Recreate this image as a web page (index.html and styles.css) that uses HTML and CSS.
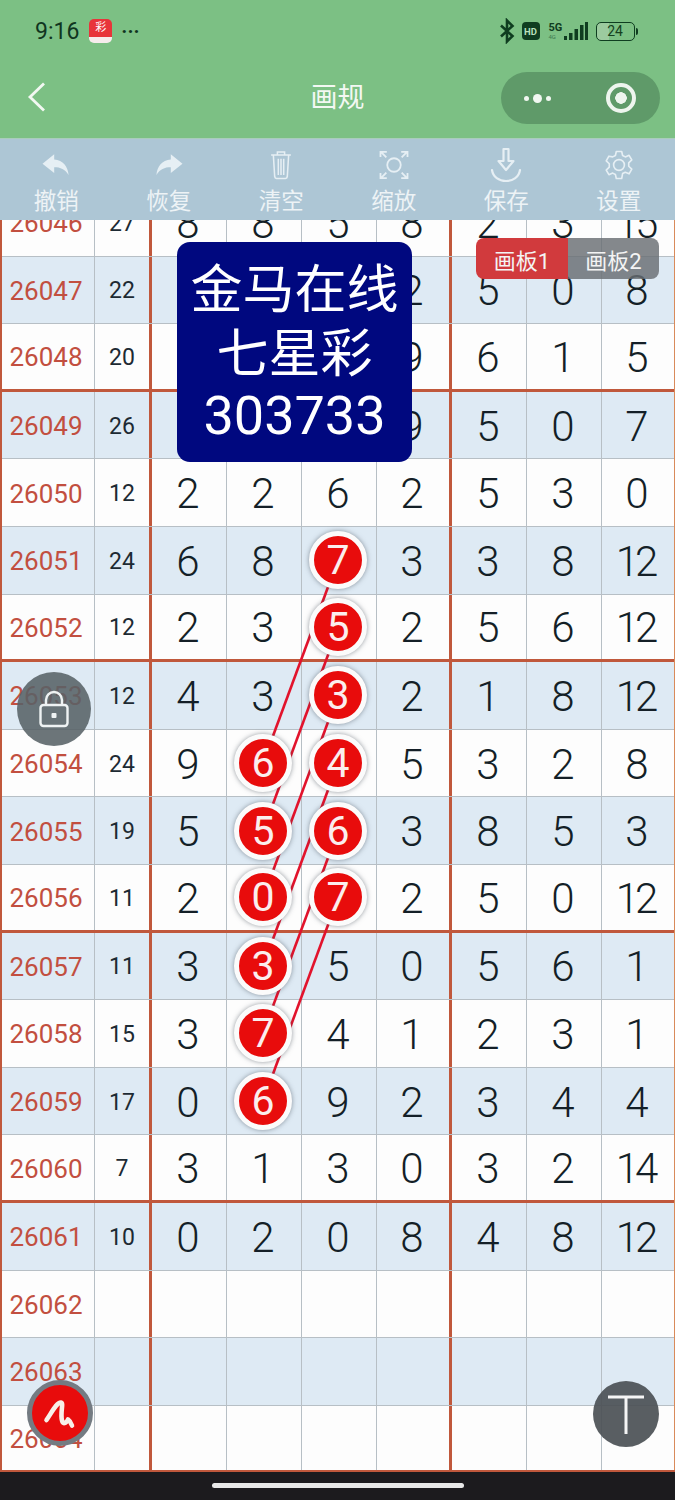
FILE: index.html
```html
<!DOCTYPE html>
<html lang="zh">
<head>
<meta charset="utf-8">
<title>画规</title>
<link rel="stylesheet" href="styles.css">
</head>
<body>
<div class="screen">
  <header class="top">
    <div class="status">
      <div class="status-left">
        <span class="time">9:16</span>
        <span class="app-icon"><span class="app-mark">彩</span></span>
        <span class="status-dots">···</span>
      </div>
      <div class="status-right">
        <svg class="bt" width="16" height="26" viewBox="0 0 16 26"><path d="M2 7.500L13.500 18 8 23.500V2.500L13.500 8 2 18.500" fill="none" stroke="#0f3d20" stroke-width="2.600"/></svg>
        <span class="hd">HD</span>
        <span class="net"><span class="net-5g">5G</span><span class="net-4g">4G</span></span>
        <svg class="signal" width="24" height="20" viewBox="0 0 24 20"><g fill="#0f3d20"><rect x="0" y="15" width="3" height="4"/><rect x="5" y="12" width="3.500" height="7"/><rect x="10.500" y="8" width="3.500" height="11"/><rect x="16" y="4" width="3.500" height="15"/><rect x="21" y="1" width="3" height="18"/></g></svg>
        <span class="battery"><span class="battery-level">24</span></span>
        <span class="battery-cap"></span>
      </div>
    </div>
    <div class="nav">
      <svg class="back" width="20" height="32" viewBox="0 0 20 32"><path d="M17 2.500L3 16l14 13.500" fill="none" stroke="#f2f8f2" stroke-width="2.800"/></svg>
      <h1 class="title">画规</h1>
      <div class="capsule">
        <span class="cap-dots"><i class="dot-s"></i><i class="dot-l"></i><i class="dot-s"></i></span>
        <span class="cap-ring"></span>
      </div>
    </div>
  </header>

  <nav class="toolbar">
    <div class="tool">
      <svg class="tool-icon" width="36" height="36" viewBox="-2 -2 40 40"><path d="M16 6L3 16.500 16 27v-6.500c7 0 12 2 16 8.500-1-9.500-6-16-16-17z" fill="#e6eff4"/></svg>
      <span class="tool-label">撤销</span>
    </div>
    <div class="tool">
      <svg class="tool-icon" width="36" height="36" viewBox="-2 -2 40 40"><path d="M20 6l13 10.500L20 27v-6.500c-7 0-12 2-16 8.500 1-9.500 6-16 16-17z" fill="#e6eff4"/></svg>
      <span class="tool-label">恢复</span>
    </div>
    <div class="tool">
      <svg class="tool-icon" width="36" height="36" viewBox="-2 -2 40 40"><g fill="none" stroke="#e6eff4" stroke-width="1.700"><path d="M7 7h22M14 7V3.500h8V7M9.500 7l1.500 24q.2 2 2 2h10q1.800 0 2-2l1.500-24M15 11v18M18 11v18M21 11v18"/></g></svg>
      <span class="tool-label">清空</span>
    </div>
    <div class="tool">
      <svg class="tool-icon" width="36" height="36" viewBox="-2 -2 40 40"><g fill="none" stroke="#e6eff4" stroke-width="2"><circle cx="18" cy="18" r="7.500"/><path d="M3 9V3.500h7M3.500 3.500l6 6M33 9V3.500h-7M32.500 3.500l-6 6M3 27v5.500h7M3.500 32.500l6-6M33 27v5.500h-7M32.500 32.500l-6-6"/></g></svg>
      <span class="tool-label">缩放</span>
    </div>
    <div class="tool">
      <svg class="tool-icon" width="36" height="36" viewBox="0 0 36 36"><g fill="none" stroke="#e6eff4" stroke-width="2.200" stroke-linejoin="round" stroke-linecap="round"><path d="M15.500 2h5v12h5L18 23l-7.500-9h5z"/><path d="M4 23c1 7 7 11 14 11s13-4 14-11"/></g></svg>
      <span class="tool-label">保存</span>
    </div>
    <div class="tool">
      <svg class="tool-icon" width="36" height="36" viewBox="-2 -2 40 40"><g fill="none" stroke="#e6eff4" stroke-width="1.800" stroke-linejoin="round"><circle cx="18" cy="18" r="6"/><path d="M15 3h6l1 4.500 3 1.500 4.200-1.800 3 5.200-3.400 3.200v3.800l3.400 3.200-3 5.200-4.200-1.800-3 1.500L21 33h-6l-1-4.500-3-1.500-4.200 1.800-3-5.200 3.400-3.200v-3.800l-3.400-3.200 3-5.200L11 9l3-1.500z"/></g></svg>
      <span class="tool-label">设置</span>
    </div>
  </nav>

  <main class="board">
    <div class="grid">
      <div class="row"><div class="cell period">26046</div><div class="cell sum">27</div><div class="cell num">8</div><div class="cell num">8</div><div class="cell num">5</div><div class="cell num sep">8</div><div class="cell num">2</div><div class="cell num">3</div><div class="cell num two">15</div></div>
      <div class="row odd"><div class="cell period">26047</div><div class="cell sum">22</div><div class="cell num"></div><div class="cell num"></div><div class="cell num"></div><div class="cell num sep">2</div><div class="cell num">5</div><div class="cell num">0</div><div class="cell num">8</div></div>
      <div class="row group-end"><div class="cell period">26048</div><div class="cell sum">20</div><div class="cell num"></div><div class="cell num"></div><div class="cell num"></div><div class="cell num sep">9</div><div class="cell num">6</div><div class="cell num">1</div><div class="cell num">5</div></div>
      <div class="row odd"><div class="cell period">26049</div><div class="cell sum">26</div><div class="cell num"></div><div class="cell num"></div><div class="cell num"></div><div class="cell num sep">9</div><div class="cell num">5</div><div class="cell num">0</div><div class="cell num">7</div></div>
      <div class="row"><div class="cell period">26050</div><div class="cell sum">12</div><div class="cell num">2</div><div class="cell num">2</div><div class="cell num">6</div><div class="cell num sep">2</div><div class="cell num">5</div><div class="cell num">3</div><div class="cell num">0</div></div>
      <div class="row odd"><div class="cell period">26051</div><div class="cell sum">24</div><div class="cell num">6</div><div class="cell num">8</div><div class="cell num"><span class="ball">7</span></div><div class="cell num sep">3</div><div class="cell num">3</div><div class="cell num">8</div><div class="cell num two">12</div></div>
      <div class="row group-end"><div class="cell period">26052</div><div class="cell sum">12</div><div class="cell num">2</div><div class="cell num">3</div><div class="cell num"><span class="ball">5</span></div><div class="cell num sep">2</div><div class="cell num">5</div><div class="cell num">6</div><div class="cell num two">12</div></div>
      <div class="row odd"><div class="cell period">26053</div><div class="cell sum">12</div><div class="cell num">4</div><div class="cell num">3</div><div class="cell num"><span class="ball">3</span></div><div class="cell num sep">2</div><div class="cell num">1</div><div class="cell num">8</div><div class="cell num two">12</div></div>
      <div class="row"><div class="cell period">26054</div><div class="cell sum">24</div><div class="cell num">9</div><div class="cell num"><span class="ball">6</span></div><div class="cell num"><span class="ball">4</span></div><div class="cell num sep">5</div><div class="cell num">3</div><div class="cell num">2</div><div class="cell num">8</div></div>
      <div class="row odd"><div class="cell period">26055</div><div class="cell sum">19</div><div class="cell num">5</div><div class="cell num"><span class="ball">5</span></div><div class="cell num"><span class="ball">6</span></div><div class="cell num sep">3</div><div class="cell num">8</div><div class="cell num">5</div><div class="cell num">3</div></div>
      <div class="row group-end"><div class="cell period">26056</div><div class="cell sum">11</div><div class="cell num">2</div><div class="cell num"><span class="ball">0</span></div><div class="cell num"><span class="ball">7</span></div><div class="cell num sep">2</div><div class="cell num">5</div><div class="cell num">0</div><div class="cell num two">12</div></div>
      <div class="row odd"><div class="cell period">26057</div><div class="cell sum">11</div><div class="cell num">3</div><div class="cell num"><span class="ball">3</span></div><div class="cell num">5</div><div class="cell num sep">0</div><div class="cell num">5</div><div class="cell num">6</div><div class="cell num">1</div></div>
      <div class="row"><div class="cell period">26058</div><div class="cell sum">15</div><div class="cell num">3</div><div class="cell num"><span class="ball">7</span></div><div class="cell num">4</div><div class="cell num sep">1</div><div class="cell num">2</div><div class="cell num">3</div><div class="cell num">1</div></div>
      <div class="row odd"><div class="cell period">26059</div><div class="cell sum">17</div><div class="cell num">0</div><div class="cell num"><span class="ball">6</span></div><div class="cell num">9</div><div class="cell num sep">2</div><div class="cell num">3</div><div class="cell num">4</div><div class="cell num">4</div></div>
      <div class="row group-end"><div class="cell period">26060</div><div class="cell sum">7</div><div class="cell num">3</div><div class="cell num">1</div><div class="cell num">3</div><div class="cell num sep">0</div><div class="cell num">3</div><div class="cell num">2</div><div class="cell num two">14</div></div>
      <div class="row odd"><div class="cell period">26061</div><div class="cell sum">10</div><div class="cell num">0</div><div class="cell num">2</div><div class="cell num">0</div><div class="cell num sep">8</div><div class="cell num">4</div><div class="cell num">8</div><div class="cell num two">12</div></div>
      <div class="row"><div class="cell period">26062</div><div class="cell sum"></div><div class="cell num"></div><div class="cell num"></div><div class="cell num"></div><div class="cell num sep"></div><div class="cell num"></div><div class="cell num"></div><div class="cell num"></div></div>
      <div class="row odd"><div class="cell period">26063</div><div class="cell sum"></div><div class="cell num"></div><div class="cell num"></div><div class="cell num"></div><div class="cell num sep"></div><div class="cell num"></div><div class="cell num"></div><div class="cell num"></div></div>
      <div class="row group-end"><div class="cell period">26064</div><div class="cell sum"></div><div class="cell num"></div><div class="cell num"></div><div class="cell num"></div><div class="cell num sep"></div><div class="cell num"></div><div class="cell num"></div><div class="cell num"></div></div>
    </div>

    <svg class="links" width="675" height="1252" viewBox="0 0 675 1252">
      <g stroke="#e2132c" stroke-width="2.600">
        <line x1="338" y1="340" x2="263" y2="543"/>
        <line x1="338" y1="408" x2="263" y2="611"/>
        <line x1="338" y1="475" x2="263" y2="678"/>
        <line x1="338" y1="543" x2="263" y2="746"/>
        <line x1="338" y1="611" x2="263" y2="813"/>
        <line x1="338" y1="678" x2="263" y2="881"/>
      </g>
    </svg>

    <div class="tabs">
      <span class="tab tab-on">画板1</span>
      <span class="tab tab-off">画板2</span>
    </div>

    <div class="notice">
      <div>金马在线</div>
      <div>七星彩</div>
      <div class="notice-num">303733</div>
    </div>

    <button class="fab lock" aria-label="锁定">
      <svg width="34" height="40" viewBox="0 0 34 40"><g fill="none" stroke="#eef2f3" stroke-width="2.400"><rect x="3.500" y="16" width="27" height="21" rx="3"/><path d="M9 16V11a8 8 0 0 1 16 0v5"/></g><rect x="14.500" y="24" width="5" height="5" rx="1" fill="#eef2f3"/></svg>
    </button>
    <button class="fab brand" aria-label="画笔">
      <svg width="56" height="56" viewBox="0 0 56 56"><path d="M14.500 35C20 27 25 17 29 17.500c3 .5-1 10 1 18 1 4 4 3 6-1 1.500 1 3 3.500 4 6" fill="none" stroke="#f8efe8" stroke-width="4.600" stroke-linecap="round" stroke-linejoin="round"/></svg>
    </button>
    <button class="fab totop" aria-label="置顶">
      <svg width="40" height="44" viewBox="0 0 40 44"><path d="M2 5h36M20 5v37" fill="none" stroke="#f5f5f5" stroke-width="3"/></svg>
    </button>
  </main>

  <footer class="sysbar"><span class="handle"></span></footer>
</div>
</body>
</html>
```
FILE: styles.css
```css
* { box-sizing: border-box; }
html, body { margin: 0; padding: 0; }
body {
  width: 675px;
  height: 1500px;
  overflow: hidden;
  font-family: Roboto, "Noto Sans CJK SC", sans-serif;
}
.screen {
  width: 675px;
  height: 1500px;
  display: flex;
  flex-direction: column;
  position: relative;
}

/* top */
.top { height: 138px; background: #7cc084; flex: none; }
.status {
  height: 62px;
  padding: 0 37px 0 35px;
  display: flex;
  align-items: center;
  justify-content: space-between;
  color: #10351f;
}
.status-left, .status-right { display: flex; align-items: center; }
.time { font-size: 23px; font-weight: 400; margin-right: 10px; }
.app-icon {
  width: 23px;
  height: 24px;
  border-radius: 5px;
  background: linear-gradient(#e8343a 0 76%, #f6ecec 76%);
  display: flex;
  justify-content: center;
  overflow: hidden;
  margin-right: 9px;
}
.app-mark { font-size: 11px; line-height: 17px; color: #fff; }
.status-dots { font-size: 20px; font-weight: 700; letter-spacing: 0; line-height: 20px; }
.bt { margin-right: 7px; }
.hd {
  width: 18px;
  height: 18px;
  border-radius: 4px;
  background: #0f3d20;
  color: #b8e0bc;
  font-size: 9.500px;
  font-weight: 700;
  display: flex;
  align-items: center;
  justify-content: center;
  margin-right: 9px;
}
.net { display: flex; flex-direction: column; width: 17px; line-height: 1; }
.net-5g { font-size: 11px; font-weight: 700; color: #0f3d20; }
.net-4g { font-size: 6px; color: #3e7a50; margin-top: 1px; }
.signal { margin-right: 8px; margin-left: -2px; }
.battery {
  width: 39px;
  height: 19px;
  border: 1.500px solid #0f3d20;
  border-radius: 5px;
  display: flex;
  align-items: center;
  justify-content: center;
  background: linear-gradient(90deg, #9ccb9f 0 32%, transparent 32%);
}
.battery-level { font-size: 14px; color: #16401f; }
.battery-cap { width: 2.500px; height: 7px; background: #0f3d20; margin-left: 1px; border-radius: 0 2px 2px 0; }

.nav {
  height: 76px;
  position: relative;
  display: flex;
  align-items: center;
  justify-content: center;
  padding-bottom: 4px;
}
.back { position: absolute; left: 27px; top: 19px; }
.title { margin: 0; font-size: 27px; font-weight: 400; color: #f3f8f3; line-height: 1; }
.capsule {
  position: absolute;
  left: 501px;
  top: 10px;
  width: 159px;
  height: 52px;
  border-radius: 26px;
  background: #5f9a69;
  display: flex;
  align-items: center;
  justify-content: space-between;
  padding: 0 24px 0 23px;
}
.cap-dots { display: flex; align-items: center; gap: 4px; }
.dot-s { width: 5px; height: 5px; border-radius: 50%; background: #f1f7f1; }
.dot-l { width: 9px; height: 9px; border-radius: 50%; background: #f1f7f1; }
.cap-ring {
  width: 30px;
  height: 30px;
  border-radius: 50%;
  border: 4px solid #eef5ee;
  display: flex;
  position: relative;
  background: radial-gradient(circle, #eef5ee 0 5.500px, transparent 6px);
}

/* toolbar */
.toolbar {
  height: 82px;
  flex: none;
  background: #adc6d5;
  display: grid;
  grid-template-columns: repeat(6, 112.500px);
  border-top: 1px solid #a9cdbb;
}
.tool { display: flex; flex-direction: column; align-items: center; padding-top: 8px; }
.tool-icon { display: block; }
.tool-label { font-size: 22.500px; line-height: 28px; color: #edf3f6; margin-top: 4px; }

/* board */
.board {
  flex: 1;
  min-height: 0;
  position: relative;
  overflow: hidden;
  background: #fdfdfd;
  border-bottom: 2px solid #c0583c;
}
.grid {
  margin-top: -31px;
  border-left: 2px solid #c0583c;
  border-right: 1px solid #d98a5a;
}
.row {
  height: 67.600px;
  display: grid;
  grid-template-columns: 93px 57px repeat(6, 75px) 1fr;
  background: #fdfdfd;
  border-bottom: 1.500px solid #b7bfc5;
}
.row.odd { background: #deeaf4; }
.row.group-end { border-bottom: 3px solid #c0583c; }
.cell {
  display: flex;
  align-items: center;
  justify-content: center;
  border-right: 1.500px solid #b7bfc5;
  min-width: 0;
  padding-top: 2px;
}
.cell:last-child { border-right: 0; }
.period { font-size: 26px; color: #c24f40; font-weight: 400; padding-right: 4px; }
.sum { font-size: 23px; color: #1d2a33; border-right: 3px solid #c0583c; }
.num { font-size: 42px; font-weight: 300; color: #141f27; padding-right: 2px; }
.num.two { letter-spacing: -4px; padding-right: 6px; }
.num.sep { border-right: 3px solid #c0583c; }
.ball {
  width: 58px;
  height: 58px;
  margin-top: -2px;
  border-radius: 50%;
  background: #e80c0c;
  border: 5.500px solid #fbfbfb;
  box-shadow: 0 0 5px rgba(60, 70, 80, .55);
  color: #fbeeee;
  font-size: 41px;
  font-weight: 400;
  display: flex;
  align-items: center;
  justify-content: center;
  position: relative;
  z-index: 2;
  flex: none;
}
.links { position: absolute; left: 0; top: 0; z-index: 1; pointer-events: none; }

/* floating */
.tabs { position: absolute; left: 476px; top: 18px; display: flex; z-index: 3; }
.tab {
  width: 92px;
  height: 41px;
  display: flex;
  align-items: center;
  justify-content: center;
  color: #f4f4f4;
  font-size: 22px;
}
.tab-on { background: #d13a3d; border-radius: 8px 0 0 8px; }
.tab-off { width: 91px; background: rgba(105, 110, 115, .82); border-radius: 0 8px 8px 0; }
.notice {
  position: absolute;
  left: 177px;
  top: 22px;
  width: 235px;
  height: 220px;
  border-radius: 13px;
  background: #00087f;
  color: #fff;
  font-size: 52px;
  line-height: 64px;
  text-align: center;
  padding-top: 17px;
  z-index: 3;
}
.notice-num { font-size: 54px; font-weight: 400; line-height: 58px; }
.fab {
  position: absolute;
  border: 0;
  padding: 0;
  border-radius: 50%;
  display: flex;
  align-items: center;
  justify-content: center;
  z-index: 4;
}
.lock { left: 17px; top: 452px; width: 74px; height: 74px; background: rgba(88, 98, 103, .88); }
.brand { left: 27px; top: 1160px; width: 66px; height: 66px; background: #e80c0c; border: 5px solid #747b82; }
.totop { left: 593px; top: 1161px; width: 66px; height: 66px; background: rgba(75, 80, 85, .92); }

.sysbar {
  height: 28px;
  flex: none;
  background: #1c1b1e;
  display: flex;
  justify-content: center;
  padding-top: 11px;
}
.handle { width: 252px; height: 5px; border-radius: 3px; background: #e8e8e8; }
```
